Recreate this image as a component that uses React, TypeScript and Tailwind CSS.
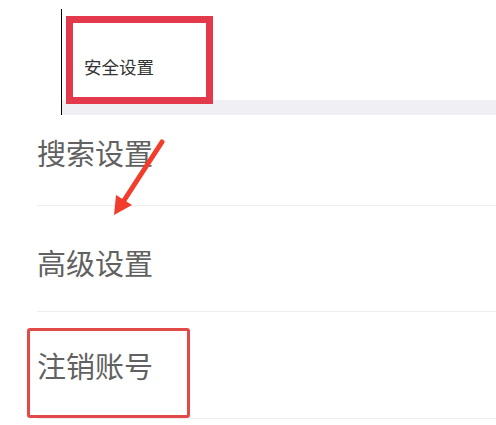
import React from "react";

const font = { fontFamily: '"Noto Sans CJK SC", "Noto Sans", sans-serif' };

export default function App() {
  return (
    <div className="relative w-[496px] h-[425px] overflow-hidden bg-white" style={font}>
      {/* header */}
      <div className="h-[115px] pt-[9px]">
        <div className="ml-[61px] h-[106px] border-l border-black flex flex-col">
          <div className="flex-1 pl-[22px] pt-[46px]">
            <span className="text-[17.5px] leading-[17px] text-[#333333]">安全设置</span>
          </div>
          <div className="h-[15px] bg-[#f0f0f4]" />
        </div>
      </div>

      {/* list */}
      <div className="pl-[37px]">
        <div className="h-[91px] pt-[23px] border-b border-[#eeeeee]">
          <span className="text-[29px] leading-[28px] text-[#616161]">搜索设置</span>
        </div>
        <div className="h-[106px] pt-[42px] border-b border-[#eeeeee]">
          <span className="text-[29px] leading-[28px] text-[#616161]">高级设置</span>
        </div>
        <div className="h-[107px] pt-[39px] border-b border-[#eeeeee]">
          <span className="text-[29px] leading-[28px] text-[#616161]">注销账号</span>
        </div>
      </div>

      {/* annotations */}
      <div className="absolute left-[66px] top-[16px] w-[147px] h-[88px] border-[7px] border-[#e23a4b]" />
      <div className="absolute left-[27px] top-[328px] w-[163px] h-[90px] border-[3px] border-[#e24a4a] rounded-[3px]" />
      <svg className="absolute inset-0 pointer-events-none" width="496" height="425" viewBox="0 0 496 425">
        <line x1="162" y1="142" x2="123" y2="202" stroke="#f23c2c" strokeWidth="5" strokeLinecap="round" />
        <polygon points="114,215 116,195 132,205" fill="#f23c2c" />
      </svg>
    </div>
  );
}
